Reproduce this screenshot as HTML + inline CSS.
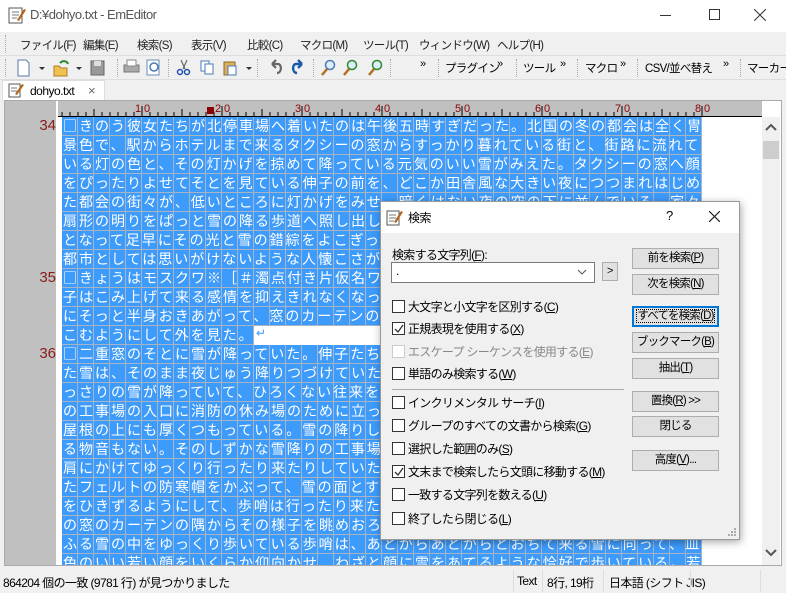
<!DOCTYPE html>
<html><head><meta charset="utf-8"><style>
*{margin:0;padding:0;box-sizing:border-box}
body{width:786px;height:593px;background:#f0f0f0;position:relative;overflow:hidden;font-family:"Liberation Sans","Noto Sans CJK JP",sans-serif;font-size:12px;color:#000;white-space:nowrap;letter-spacing:-0.5px}
.a{position:absolute;white-space:nowrap}
.menu span{position:absolute;top:37px;font-size:11.5px;color:#222;letter-spacing:-0.7px}
.r{position:absolute;left:4px;height:19px;width:640px;overflow:hidden;white-space:nowrap;font-family:"Noto Sans CJK JP",sans-serif;font-size:14px;line-height:18px;letter-spacing:2px;text-indent:1px;color:#fff;background:repeating-linear-gradient(90deg,#3d9bfc 0 15px,#a8b4c4 15px 16px);border-bottom:1px solid #a8b4c4}
.ln{position:absolute;left:30px;width:26px;text-align:right;color:#8b1a1a;font-size:15px;font-family:"Liberation Sans",sans-serif;letter-spacing:0}
.cb{position:absolute;left:392px;width:13px;height:13px;border:1px solid #333;background:#fff}
.cl{position:absolute;left:408px;font-size:12px;letter-spacing:-0.7px}
.btn{position:absolute;left:632px;width:87px;height:21px;border:1px solid #adadad;background:#e1e1e1;text-align:center;line-height:19px;font-size:11.5px;letter-spacing:-0.8px;white-space:nowrap;overflow:hidden}
.tb{position:absolute;top:68px;font-size:11.5px;letter-spacing:-0.7px}
.sep{position:absolute;top:59px;width:1px;height:18px;border-left:1px dotted #aaa}
.st{position:absolute;top:574px;font-size:12px;letter-spacing:-0.6px}
.vs{position:absolute;top:570px;width:1px;height:22px;background:#ddd}
</style></head><body>
<div class="a" style="left:0;top:0;width:786px;height:32px;background:#fff"></div>
<svg class="a" style="left:8px;top:6px" width="18" height="18"><rect x="1" y="2" width="13" height="15" fill="#fff" stroke="#555"/><path d="M4 6h7M4 9h7M4 12h5" stroke="#777"/><path d="M9 14L16 3l2 1-7 11z" fill="#b5651d"/></svg>
<div class="a" style="left:30px;top:7px;font-size:13px;color:#555">D:¥dohyo.txt - EmEditor</div>
<div class="a" style="left:660px;top:15px;width:11px;height:1px;background:#333"></div>
<div class="a" style="left:709px;top:9px;width:11px;height:11px;border:1px solid #333"></div>
<svg class="a" style="left:754px;top:9px" width="12" height="12"><path d="M0 0L12 12M12 0L0 12" stroke="#333"/></svg>
<div class="a" style="left:0;top:32px;width:786px;height:24px;border-bottom:1px solid #ddd"></div>
<div class="a" style="left:5px;top:35px;height:18px;border-left:1px dotted #aaa"></div>
<div class="menu"><span style="left:20px">ファイル(F)</span><span style="left:83px">編集(E)</span><span style="left:137px">検索(S)</span><span style="left:191px">表示(V)</span><span style="left:247px">比較(C)</span><span style="left:300px">マクロ(M)</span><span style="left:363px">ツール(T)</span><span style="left:419px">ウィンドウ(W)</span><span style="left:497px">ヘルプ(H)</span></div>
<div class="a" style="left:0;top:56px;width:786px;height:24px;border-bottom:1px solid #ddd"></div>
<div class="sep" style="left:5px"></div>
<svg class="a" style="left:14px;top:58px" width="400" height="20">
<path d="M4 2h8l3 3v13H4z" fill="#fff" stroke="#5a7aa8"/><path d="M25 9l6 0-3 3z" fill="#333"/>
<path d="M40 8h5l2 2h6v8H40z" fill="#f0c050" stroke="#b08020"/><path d="M46 5c3-3 7-2 8 1" stroke="#2a8a2a" stroke-width="2" fill="none"/><path d="M62 9h6l-3 3z" fill="#333"/>
<rect x="77" y="3" width="13" height="14" fill="#999" stroke="#666"/><rect x="80" y="3" width="7" height="5" fill="#ddd"/>
<rect x="110" y="7" width="15" height="7" fill="#aaa" stroke="#777"/><rect x="113" y="2" width="9" height="6" fill="#fff" stroke="#888"/>
<rect x="133" y="2" width="12" height="15" fill="#fff" stroke="#6a8ab8"/><circle cx="140" cy="9" r="4" fill="none" stroke="#4a7ab8" stroke-width="1.5"/>
<path d="M167 2l4 9M173 2l-4 9" stroke="#555"/><circle cx="166" cy="14" r="2.5" fill="none" stroke="#2050b0" stroke-width="1.5"/><circle cx="173" cy="14" r="2.5" fill="none" stroke="#2050b0" stroke-width="1.5"/>
<rect x="187" y="3" width="8" height="10" fill="#fff" stroke="#4a7ab8"/><rect x="191" y="6" width="8" height="10" fill="#fff" stroke="#4a7ab8"/>
<rect x="210" y="4" width="11" height="13" fill="#d8b060" stroke="#8a6a20"/><rect x="214" y="8" width="8" height="9" fill="#fff" stroke="#4a7ab8"/><path d="M232 9h6l-3 3z" fill="#333"/>
<path d="M258 6h6c4 0 4 9-1 9M258 6l4-4M258 6l4 4" stroke="#666" stroke-width="2.2" fill="none"/>
<path d="M288 6h-6c-4 0-4 9 1 9M288 6l-4-4M288 6l-4 4" stroke="#1a5aa8" stroke-width="2.4" fill="none"/>
<circle cx="316" cy="7" r="4.5" fill="#def" stroke="#4a7ab8" stroke-width="1.5"/><path d="M313 11l-5 6" stroke="#b07020" stroke-width="2.5"/>
<circle cx="338" cy="7" r="4.5" fill="#def" stroke="#2a8a2a" stroke-width="1.5"/><path d="M335 11l-5 6" stroke="#b07020" stroke-width="2.5"/>
<circle cx="363" cy="7" r="4.5" fill="#def" stroke="#2a8a2a" stroke-width="1.5"/><path d="M360 11l-5 6" stroke="#b07020" stroke-width="2.5"/>
</svg>
<div class="sep" style="left:117px"></div><div class="sep" style="left:168px"></div><div class="sep" style="left:257px"></div><div class="sep" style="left:313px"></div><div class="sep" style="left:390px"></div>
<div class="tb" style="left:420px;top:58px;font-size:11px">»</div>
<div class="sep" style="left:438px"></div><div class="tb" style="left:445px;top:60px">プラグイン</div><div class="tb" style="left:497px;top:58px;font-size:11px">»</div>
<div class="sep" style="left:516px"></div><div class="tb" style="left:523px;top:60px">ツール</div><div class="tb" style="left:560px;top:58px;font-size:11px">»</div>
<div class="sep" style="left:577px"></div><div class="tb" style="left:585px;top:60px">マクロ</div><div class="tb" style="left:620px;top:58px;font-size:11px">»</div>
<div class="sep" style="left:637px"></div><div class="tb" style="left:645px;top:60px">CSV/並べ替え</div><div class="tb" style="left:723px;top:58px;font-size:11px">»</div>
<div class="sep" style="left:740px"></div><div class="tb" style="left:747px;top:60px">マーカー</div>
<div class="a" style="left:2px;top:80px;width:103px;height:21px;background:#fff;border:1px solid #ddd;border-bottom:none"></div>
<svg class="a" style="left:8px;top:82px" width="16" height="16"><rect x="1" y="2" width="11" height="13" fill="#fff" stroke="#555"/><path d="M3 6h6M3 9h6" stroke="#777"/><path d="M7 12L14 2l2 1-7 10z" fill="#b5651d"/></svg>
<div class="a" style="left:30px;top:84px;font-size:12px">dohyo.txt</div>
<div class="a" style="left:88px;top:83px;font-size:13px;color:#666">×</div>
<div class="a" style="left:4px;top:100px;width:778px;height:466px;background:#fff;border:1px solid #aaa"></div>
<div class="a" style="left:5px;top:101px;width:53px;height:464px;background:#c0c0c0;border-right:2px solid #fff"></div>
<div class="a" style="left:58px;top:101px;width:704px;height:15px;background:#c0c0c0"></div>
<svg class="a" style="left:58px;top:101px" width="704" height="16">
<g stroke="#000">
<path d="M4 15V11M12 15V11M20 15V11M28 15V11M36 15V8M44 15V11M52 15V11M60 15V11M68 15V11M76 15V11M84 15V5M92 15V11M100 15V11M108 15V11M116 15V11M124 15V8M132 15V11M140 15V11M148 15V11M156 15V11M164 15V5M172 15V11M180 15V11M188 15V11M196 15V11M204 15V8M212 15V11M220 15V11M228 15V11M236 15V11M244 15V5M252 15V11M260 15V11M268 15V11M276 15V11M284 15V8M292 15V11M300 15V11M308 15V11M316 15V11M324 15V5M332 15V11M340 15V11M348 15V11M356 15V11M364 15V8M372 15V11M380 15V11M388 15V11M396 15V11M404 15V5M412 15V11M420 15V11M428 15V11M436 15V11M444 15V8M452 15V11M460 15V11M468 15V11M476 15V11M484 15V5M492 15V11M500 15V11M508 15V11M516 15V11M524 15V8M532 15V11M540 15V11M548 15V11M556 15V11M564 15V5M572 15V11M580 15V11M588 15V11M596 15V11M604 15V8M612 15V11M620 15V11M628 15V11M636 15V11M644 15V5"/>
<path d="M0 15.5H704"/></g>
<rect x="149" y="6" width="7" height="7" fill="#8b0000"/>
<g fill="#8b0000" font-size="11" font-family="Liberation Sans"><text x="77" y="11">1</text><text x="86" y="11">0</text><text x="157" y="11">2</text><text x="166" y="11">0</text><text x="237" y="11">3</text><text x="246" y="11">0</text><text x="317" y="11">4</text><text x="326" y="11">0</text><text x="397" y="11">5</text><text x="406" y="11">0</text><text x="477" y="11">6</text><text x="486" y="11">0</text><text x="557" y="11">7</text><text x="566" y="11">0</text><text x="637" y="11">8</text><text x="646" y="11">0</text></g>
</svg>
<div class="ln" style="top:117px">34</div><div class="ln" style="top:269px">35</div><div class="ln" style="top:345px">36</div>
<div class="a" style="left:58px;top:117px;width:704px;height:448px;overflow:hidden">
<div class="r" style="top:0">□きのう彼女たちが北停車場へ着いたのは午後五時すぎだった。北国の冬の都会は全く冑</div>
<div class="r" style="top:19px">景色で、駅からホテルまで来るタクシーの窓からすっかり暮れている街と、街路に流れて</div>
<div class="r" style="top:38px">いる灯の色と、その灯かげを掠めて降っている元気のいい雪がみえた。タクシーの窓へ顔</div>
<div class="r" style="top:57px">をぴったりよせてそとを見ている伸子の前を、どこか田舎風な大きい夜につつまれはじめ</div>
<div class="r" style="top:76px">た都会の街々が、低いところに灯かげをみせ、暗くはない夜の空の下に並んでいる。家々</div>
<div class="r" style="top:95px">扇形の明りをぱっと雪の降る歩道へ照し出している。そこを通る人々の姿が黒いシルエッ</div>
<div class="r" style="top:114px">となって足早にその光と雪の錯綜をよこぎって行く。その光景には、北の大きい都市とし</div>
<div class="r" style="top:133px">都市としては思いがけないような人懐こさがあった。伸子はそれを感じた。そして心が動</div>
<div class="r" style="top:152px">□きょうはモスクワ※［＃濁点付き片仮名ワ、へ来て三日目だった。その朝伸子は早く</div>
<div class="r" style="top:171px">子はこみ上げて来る感情を抑えきれなくなって、まだ暗いうちに目をさました。ベッドの</div>
<div class="r" style="top:190px">にそっと半身おきあがって、窓のカーテンの隅をもちあげた。そしてガラスに顔をおしつ</div>
<div class="r" style="top:209px;width:192px">こむようにして外を見た。</div>
<div class="a" style="left:198px;top:209px;color:#3d9bfc;font-size:12px">↵</div>
<div class="r" style="top:228px">□二重窓のそとに雪が降っていた。伸子たちがつく前の日からモスクワに降りはじめてい</div>
<div class="r" style="top:247px">た雪は、そのまま夜じゅう降りつづけていたらしかった。窓の下の通りには、音もなくど</div>
<div class="r" style="top:266px">っさりの雪が降っていて、ひろくない往来をへだてた向い側に、建築中の大きい建物があ</div>
<div class="r" style="top:285px">の工事場の入口に消防の休み場のために立っている小屋がある。雪はその小さい小屋の上</div>
<div class="r" style="top:304px">屋根の上にも厚くつもっている。雪の降りしきる工事場には人影もなく、働いている音も</div>
<div class="r" style="top:323px">る物音もない。そのしずかな雪降りの工事場の前を、ひとりの歩哨が銃をかついで、その</div>
<div class="r" style="top:342px">肩にかけてゆっくり行ったり来たりしていた。毛皮の外套を着て、耳までかくれるように</div>
<div class="r" style="top:361px">たフェルトの防寒帽をかぶって、雪の面とすれすれに長い外套の裾をひいて、重い長靴を</div>
<div class="r" style="top:380px">をひきずるようにして、歩哨は行ったり来たりしていた。伸子は、しばらくのあいだホテ</div>
<div class="r" style="top:399px">の窓のカーテンの隅からその様子を眺めおろしていた。しんしんと、しずかに、たえまな</div>
<div class="r" style="top:418px">ふる雪の中をゆっくり歩いている歩哨は、あとからあとからとおちて来る雪に向って、皿</div>
<div class="r" style="top:437px">色のいい若い顔をいくらか仰向かせ、わざと顔に雪をあてるような恰好で歩いている。若</div>
</div>
<div class="a" style="left:762px;top:117px;width:18px;height:448px;background:#f0f0f0"></div>
<svg class="a" style="left:762px;top:120px" width="18" height="445"><path d="M4 10l5-5 5 5" stroke="#555" stroke-width="2" fill="none"/><rect x="1" y="21" width="16" height="18" fill="#cdcdcd"/><path d="M4 430l5 5 5-5" stroke="#555" stroke-width="2" fill="none"/></svg>
<div class="st" style="left:3px">864204 個の一致 (9781 行) が見つかりました</div>
<div class="vs" style="left:513px"></div><div class="st" style="left:517px">Text</div>
<div class="vs" style="left:542px"></div><div class="st" style="left:547px">8行, 19桁</div>
<div class="vs" style="left:603px"></div><div class="st" style="left:609px">日本語 (シフト JIS)</div>
<div class="vs" style="left:690px"></div><div class="vs" style="left:760px"></div>
<div class="a" style="left:380px;top:201px;width:360px;height:339px;background:#f0f0f0;border:1px solid #999;box-shadow:1px 2px 8px rgba(0,0,0,.35)"></div>
<div class="a" style="left:381px;top:202px;width:358px;height:31px;background:#fff"></div>
<svg class="a" style="left:386px;top:209px" width="18" height="18"><rect x="1" y="2" width="12" height="14" fill="#fff" stroke="#555"/><path d="M3 6h7M3 9h7M3 12h5" stroke="#777"/><path d="M8 13L15 2l2 1-7 11z" fill="#b5651d"/></svg>
<div class="a" style="left:408px;top:209px;font-size:12px">検索</div>
<div class="a" style="left:666px;top:208px;font-size:13px">?</div>
<svg class="a" style="left:709px;top:211px" width="11" height="11"><path d="M0 0L11 11M11 0L0 11" stroke="#222" stroke-width="1.2"/></svg>
<div class="a" style="left:392px;top:246px;letter-spacing:-0.7px">検索する文字列(<u>F</u>):</div>
<div class="a" style="left:391px;top:262px;width:204px;height:21px;background:#fff;border:1px solid #7a7a7a"></div>
<div class="a" style="left:396px;top:264px">.</div>
<svg class="a" style="left:577px;top:268px" width="10" height="8"><path d="M1 2l4 4 4-4" stroke="#555" fill="none"/></svg>
<div class="a" style="left:602px;top:262px;width:16px;height:19px;background:#e1e1e1;border:1px solid #adadad;text-align:center;line-height:17px;font-size:11px">&gt;</div>
<div class="cb" style="top:300px"></div><div class="cl" style="top:298px">大文字と小文字を区別する(<u>C</u>)</div>
<div class="cb" style="top:322px"></div><svg class="a" style="left:394px;top:324px" width="10" height="10"><path d="M1 5l3 3 5-7" stroke="#333" fill="none" stroke-width="1.3"/></svg><div class="cl" style="top:320px">正規表現を使用する(<u>X</u>)</div>
<div class="cb" style="top:345px;border-color:#ccc"></div><div class="cl" style="top:343px;color:#888">エスケープ シーケンスを使用する(<u>E</u>)</div>
<div class="cb" style="top:367px"></div><div class="cl" style="top:365px">単語のみ検索する(<u>W</u>)</div>
<div class="a" style="left:392px;top:389px;width:232px;height:1px;background:#aaa"></div>
<div class="cb" style="top:396px"></div><div class="cl" style="top:394px">インクリメンタル サーチ(<u>I</u>)</div>
<div class="cb" style="top:419px"></div><div class="cl" style="top:417px">グループのすべての文書から検索(<u>G</u>)</div>
<div class="cb" style="top:442px"></div><div class="cl" style="top:440px">選択した範囲のみ(<u>S</u>)</div>
<div class="cb" style="top:465px"></div><svg class="a" style="left:394px;top:467px" width="10" height="10"><path d="M1 5l3 3 5-7" stroke="#333" fill="none" stroke-width="1.3"/></svg><div class="cl" style="top:463px">文末まで検索したら文頭に移動する(<u>M</u>)</div>
<div class="cb" style="top:488px"></div><div class="cl" style="top:486px">一致する文字列を数える(<u>U</u>)</div>
<div class="cb" style="top:512px"></div><div class="cl" style="top:510px">終了したら閉じる(<u>L</u>)</div>
<div class="btn" style="top:248px">前を検索(<u>P</u>)</div>
<div class="btn" style="top:274px">次を検索(<u>N</u>)</div>
<div class="btn" style="top:306px;border:2px solid #0078d7;line-height:17px"><span style="outline:1px dotted #000">すべてを検索(<u>D</u>)</span></div>
<div class="btn" style="top:332px">ブックマーク(<u>B</u>)</div>
<div class="btn" style="top:358px">抽出(<u>T</u>)</div>
<div class="btn" style="top:391px">置換(<u>R</u>) &gt;&gt;</div>
<div class="btn" style="top:416px">閉じる</div>
<div class="btn" style="top:450px">高度(<u>V</u>)...</div>
<svg class="a" style="left:727px;top:527px" width="10" height="10"><g fill="#aaa"><rect x="7" y="1" width="2" height="2"/><rect x="4" y="4" width="2" height="2"/><rect x="7" y="4" width="2" height="2"/><rect x="1" y="7" width="2" height="2"/><rect x="4" y="7" width="2" height="2"/><rect x="7" y="7" width="2" height="2"/></g></svg>
</body></html>
